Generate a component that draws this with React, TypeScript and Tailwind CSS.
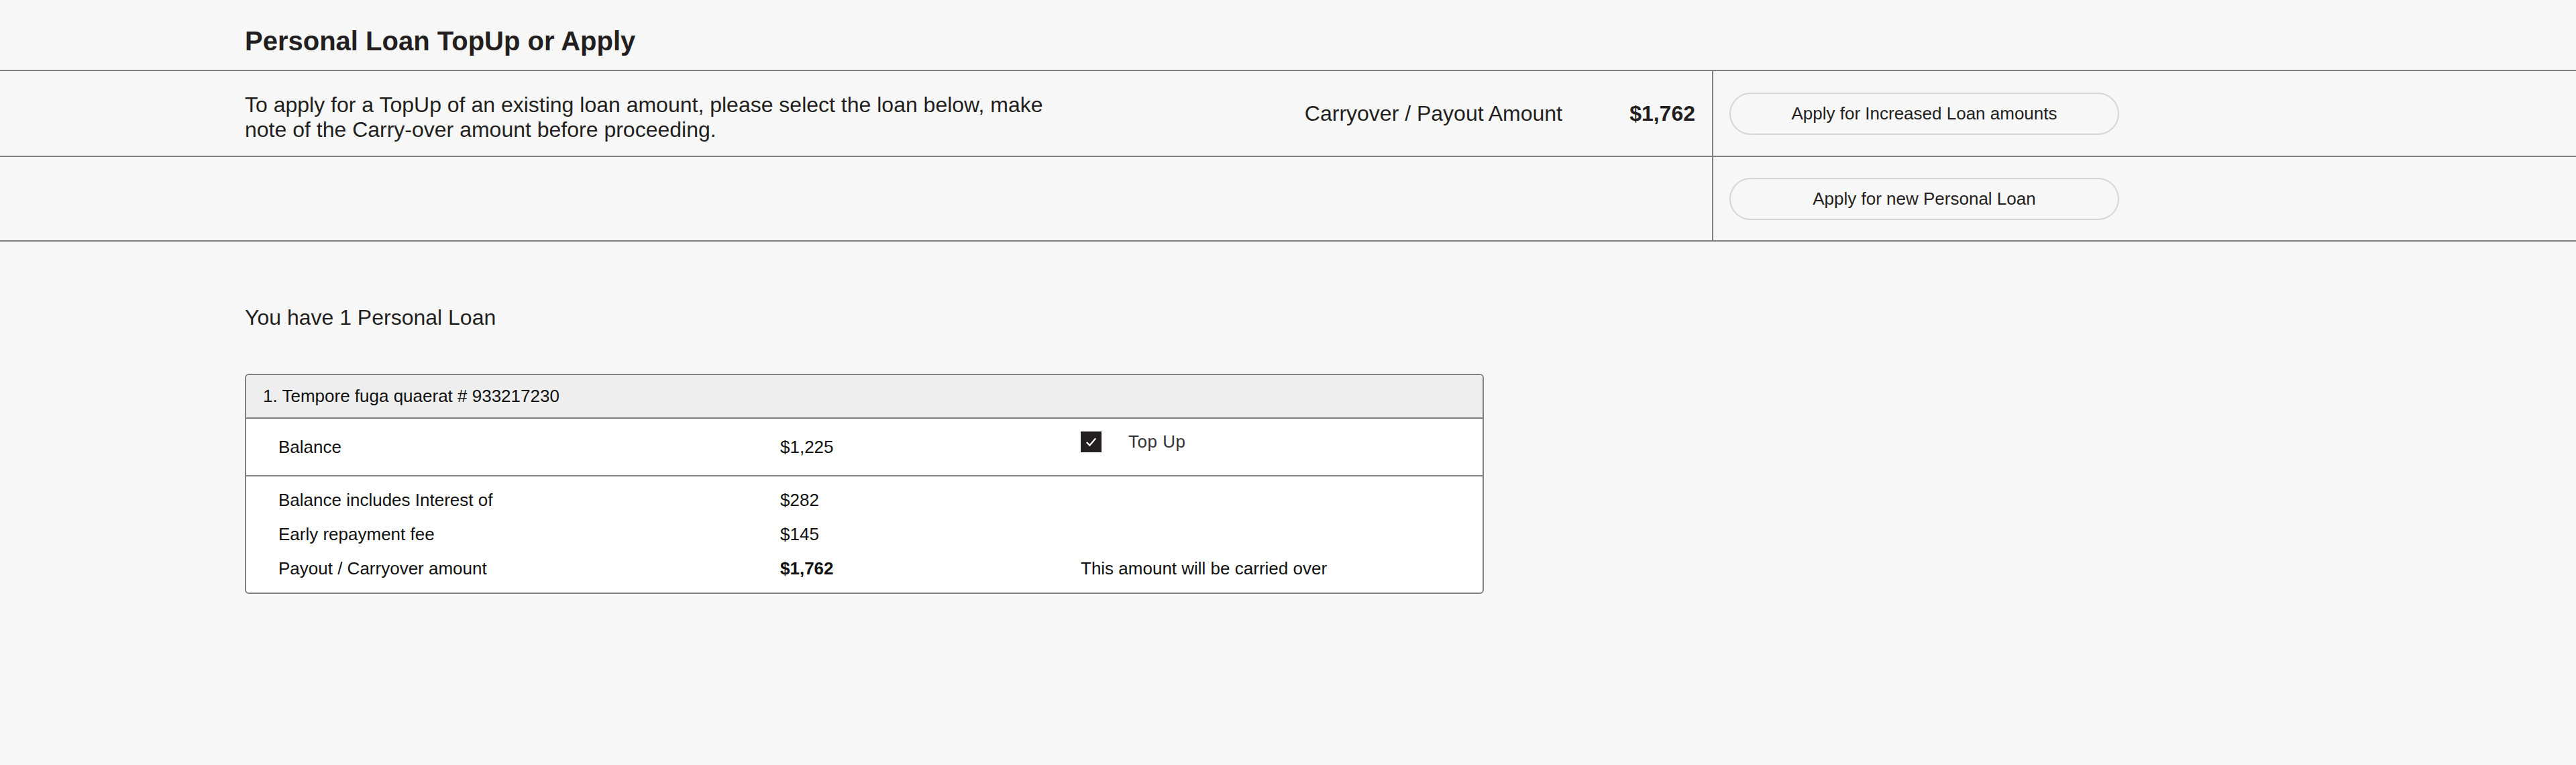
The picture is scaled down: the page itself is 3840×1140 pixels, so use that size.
import React from 'react';

interface DetailRow {
  label: string;
  value: string;
  note?: string;
  strong?: boolean;
}

const details: DetailRow[] = [
  { label: 'Balance includes Interest of', value: '$282' },
  { label: 'Early repayment fee', value: '$145' },
  {
    label: 'Payout / Carryover amount',
    value: '$1,762',
    note: 'This amount will be carried over',
    strong: true,
  },
];

function PillButton({ children }: { children: React.ReactNode }) {
  return (
    <button
      type="button"
      className="w-[581px] h-[63px] rounded-full border-2 border-[#d6d6d6] bg-transparent text-[26px] text-[#231f20]"
    >
      {children}
    </button>
  );
}

function CheckIcon() {
  return (
    <svg width="31" height="31" viewBox="0 0 30 30" aria-hidden="true">
      <rect width="30" height="30" fill="#231f20" />
      <path d="M8.5 15.5l4.5 4.5 8.5-10" fill="none" stroke="#ffffff" strokeWidth="2.2" />
    </svg>
  );
}

function LoanCard() {
  return (
    <div className="w-[1847px] border-2 border-[#808080] rounded-[6px] overflow-hidden bg-white text-[26px] text-[#111]">
      <div className="h-[65px] flex items-center px-[25px] bg-[#eeeeee] border-b-2 border-[#808080]">
        1. Tempore fuga quaerat # 933217230
      </div>
      <div className="h-[86px] grid grid-cols-[748px_448px_1fr] items-center pl-[48px] border-b-2 border-[#808080]">
        <span>Balance</span>
        <span>$1,225</span>
        <label className="flex items-center gap-[40px] pb-[15px] text-[#333] tracking-[0.5px]">
          <CheckIcon />
          Top Up
        </label>
      </div>
      <div className="pt-[10px] pb-[10px]">
        {details.map((row) => (
          <div
            key={row.label}
            className="h-[51px] grid grid-cols-[748px_448px_1fr] items-center pl-[48px]"
          >
            <span>{row.label}</span>
            <span className={row.strong ? 'font-bold' : ''}>{row.value}</span>
            <span>{row.note}</span>
          </div>
        ))}
      </div>
    </div>
  );
}

export default function App() {
  return (
    <div className="min-h-screen bg-[#f7f7f7] text-[#231f20] font-['Liberation_Sans',Arial,sans-serif]">
      <div className="pt-[37px] pb-[19px] pl-[365px] border-b-2 border-[#808080]">
        <h1 className="text-[40px] leading-[48px] font-bold">Personal Loan TopUp or Apply</h1>
      </div>

      <div className="flex border-b-2 border-[#808080]">
        <div className="w-[2554px] h-[126px] flex items-center pl-[365px] pr-[25px] border-r-2 border-[#808080]">
          <p className="w-[1220px] mt-[12px] text-[32px] leading-[37px]">
            To apply for a TopUp of an existing loan amount, please select the loan below, make
            note of the Carry-over amount before proceeding.
          </p>
          <div className="ml-auto flex items-center text-[32px]">
            <span>Carryover / Payout Amount</span>
            <span className="w-[198px] text-right font-bold">$1,762</span>
          </div>
        </div>
        <div className="flex items-center pl-[24px]">
          <PillButton>Apply for Increased Loan amounts</PillButton>
        </div>
      </div>

      <div className="flex border-b-2 border-[#808080]">
        <div className="w-[2554px] h-[124px] border-r-2 border-[#808080]" />
        <div className="flex items-center pl-[24px]">
          <PillButton>Apply for new Personal Loan</PillButton>
        </div>
      </div>

      <div className="pl-[365px] pt-[94px]">
        <h2 className="text-[32px] leading-[38px]">You have 1 Personal Loan</h2>
        <div className="mt-[65px]">
          <LoanCard />
        </div>
      </div>
    </div>
  );
}
